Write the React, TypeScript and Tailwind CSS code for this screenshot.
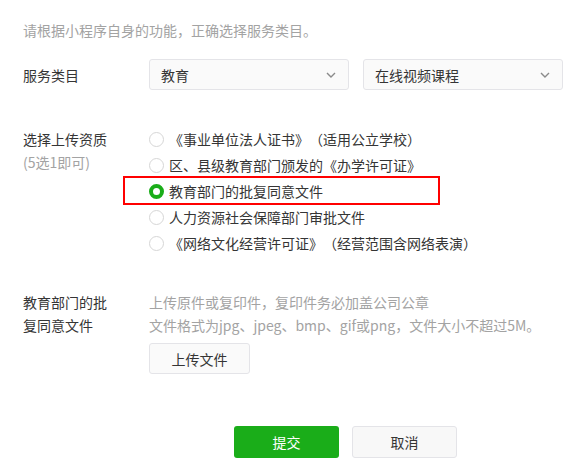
import React from "react";

const Chevron = () => (
  <svg width="10" height="6" viewBox="0 0 10 6" fill="none">
    <path d="M1 1 L5 5 L9 1" stroke="#8a8a8a" strokeWidth="1.4" />
  </svg>
);

const Select = ({ value }: { value: string }) => (
  <div className="w-[200px] h-[31px] border border-[#e4e4e8] rounded-[3px] bg-[#fafafa] pl-[11px] pr-[12px] flex items-center justify-between">
    <span className="leading-[20px]">{value}</span>
    <Chevron />
  </div>
);

const options = [
  "《事业单位法人证书》（适用公立学校）",
  "区、县级教育部门颁发的《办学许可证》",
  "教育部门的批复同意文件",
  "人力资源社会保障部门审批文件",
  "《网络文化经营许可证》（经营范围含网络表演）",
];

export default function App() {
  return (
    <div
      className="w-[586px] h-[462px] bg-white pl-[23px] text-[14px] text-[#353535] overflow-hidden [text-spacing-trim:space-all]"
      style={{ fontFamily: '"Microsoft YaHei", "Noto Sans CJK SC", "Noto Sans", sans-serif' }}
    >
      <p className="pt-[20px] leading-[20px] text-[#a3a3a3]">
        请根据小程序自身的功能，正确选择服务类目。
      </p>

      <div className="mt-[19px] flex items-center">
        <div className="w-[126px] leading-[20px]">服务类目</div>
        <div className="flex gap-[14px]">
          <Select value="教育" />
          <Select value="在线视频课程" />
        </div>
      </div>

      <div className="mt-[36px] flex">
        <div className="w-[126px]">
          <div className="h-[26px] leading-[26px]">选择上传资质</div>
          <div className="leading-[20px] text-[#a3a3a3]">(5选1即可)</div>
        </div>
        <div className="relative">
          {options.map((o, i) => (
            <div key={i} className="h-[26px] flex items-center">
              {i === 2 ? (
                <span className="w-[15px] h-[15px] rounded-full border-[4px] border-[#1aad19] bg-white shrink-0" />
              ) : (
                <span className="w-[15px] h-[15px] rounded-full border border-[#d6d6d6] bg-white shrink-0" />
              )}
              <span className="ml-[5px] leading-[20px] whitespace-nowrap">{o}</span>
            </div>
          ))}
          <div className="absolute left-[-26px] top-[50px] w-[317px] h-[29px] border-2 border-[#ff0000] pointer-events-none" />
        </div>
      </div>

      <div className="mt-[35px] flex">
        <div className="w-[126px] leading-[23px]">
          <div>教育部门的批</div>
          <div>复同意文件</div>
        </div>
        <div>
          <div className="leading-[23px] text-[#a3a3a3]">
            <div>上传原件或复印件，复印件务必加盖公司公章</div>
            <div>文件格式为jpg、jpeg、bmp、gif或png，文件大小不超过5M。</div>
          </div>
          <button className="mt-[6px] w-[101px] h-[31px] border border-[#e4e4e8] rounded-[3px] bg-[#fafafa] flex items-center justify-center leading-[20px]">
            上传文件
          </button>
        </div>
      </div>

      <div className="mt-[52px] ml-[211px] flex gap-[13px]">
        <button className="w-[105px] h-[32px] rounded-[3px] bg-[#1aad19] text-white flex items-center justify-center leading-[20px]">
          提交
        </button>
        <button className="w-[105px] h-[32px] rounded-[3px] border border-[#e4e4e8] bg-[#f8f8f8] flex items-center justify-center leading-[20px]">
          取消
        </button>
      </div>
    </div>
  );
}
